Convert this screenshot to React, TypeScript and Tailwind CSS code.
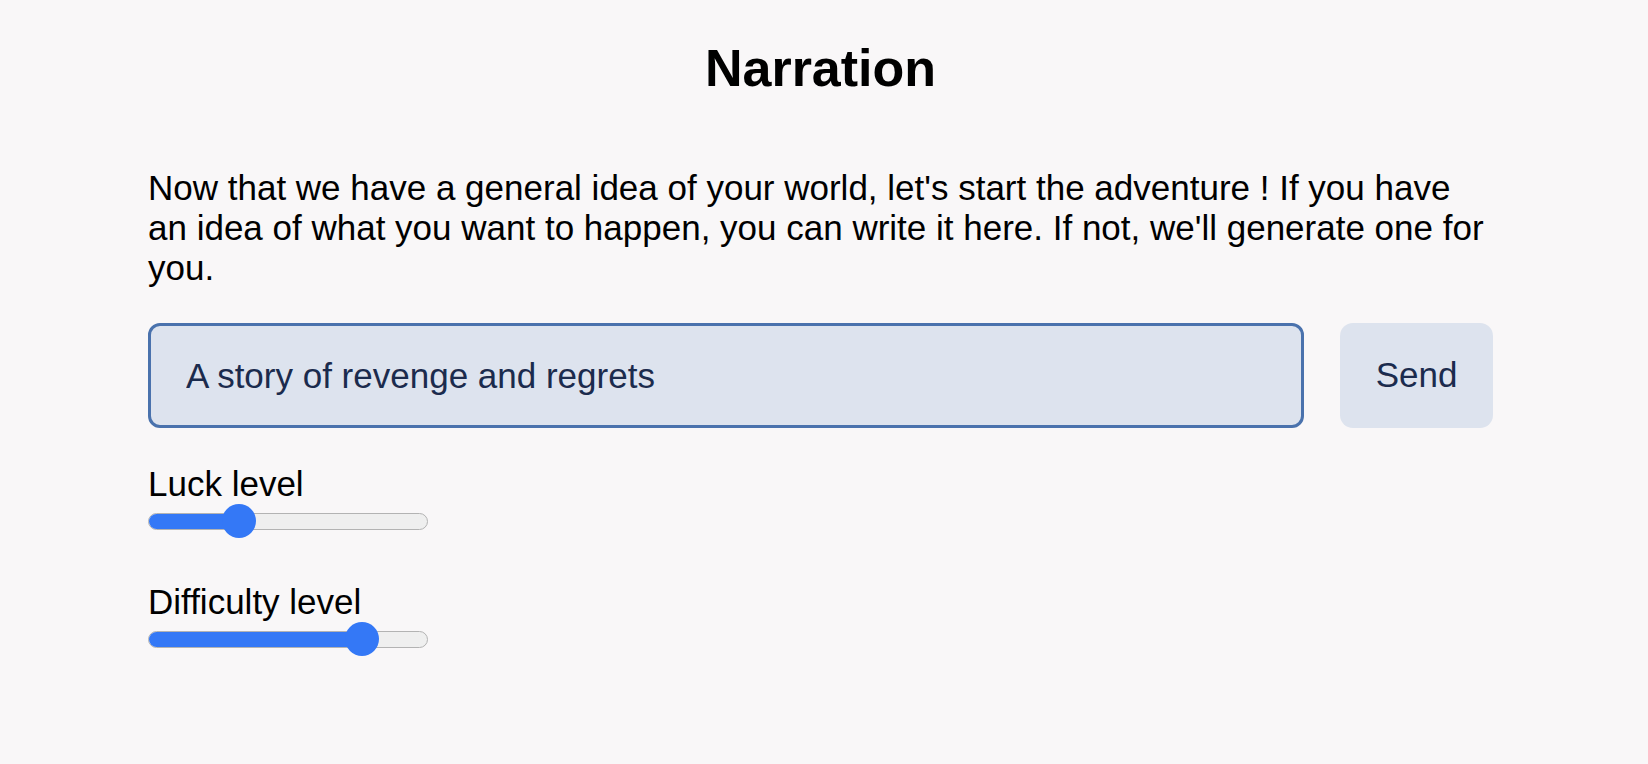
import { useState } from 'react'

interface SliderProps {
  label: string
  value: number
}

const TRACK_W = 280
const THUMB = 34

function LevelSlider({ label, value }: SliderProps) {
  const left = (value / 100) * (TRACK_W - THUMB)

  return (
    <div className="flex flex-col">
      <span className="text-[35px] leading-[40px] text-black">{label}</span>
      <div className="relative flex items-center h-[34px] w-[280px]">
        {/* Track */}
        <div className="relative h-[17px] w-full rounded-full border border-[#b3b3b3] bg-[#efefef] overflow-hidden">
          <div
            className="absolute left-0 top-0 h-full bg-[#3478f6]"
            style={{ width: left + THUMB / 2 }}
          ></div>
        </div>
        {/* Thumb */}
        <div
          className="absolute top-0 h-[34px] w-[34px] rounded-full bg-[#3478f6]"
          style={{ left }}
        ></div>
      </div>
    </div>
  )
}

export default function App() {
  const [idea, setIdea] = useState('A story of revenge and regrets')

  return (
    <div className="min-h-[764px] w-full bg-[#f9f7f8] font-['Liberation_Sans',Arial,sans-serif]">
      <div className="ml-[148px] w-[1345px] pt-[38px]">
        <h1 className="text-center text-[52px] leading-[60px] font-bold text-black">
          Narration
        </h1>

        <p className="mt-[70px] text-[35px] leading-[40px] text-black">
          Now that we have a general idea of your world, let's start the
          adventure ! If you have an idea of what you want to happen, you can
          write it here. If not, we'll generate one for you.
        </p>

        {/* Prompt */}
        <div className="mt-[35px] flex items-center gap-[36px]">
          <input
            type="text"
            value={idea}
            onChange={(e) => setIdea(e.target.value)}
            className="h-[105px] w-[1156px] rounded-[12px] border-[3px] border-[#4a72ad] bg-[#dde3ee] pl-[35px] text-[35px] text-[#1b2b4d] outline-none"
          />
          <button className="h-[105px] w-[153px] rounded-[13px] bg-[#dde3ee] text-[35px] text-[#1b2b4d]">
            Send
          </button>
        </div>

        {/* Levels */}
        <div className="mt-[36px] flex flex-col gap-[44px]">
          <LevelSlider label="Luck level" value={30} />
          <LevelSlider label="Difficulty level" value={80} />
        </div>
      </div>
    </div>
  )
}
